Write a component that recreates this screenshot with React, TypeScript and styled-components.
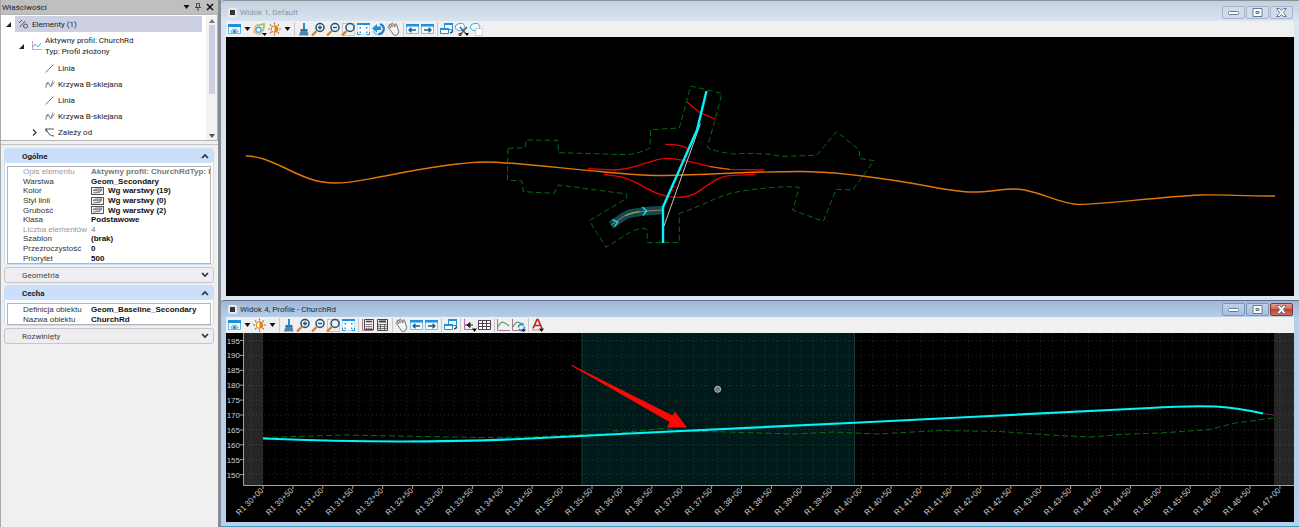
import React from "react";
import styled, { createGlobalStyle, css } from "styled-components";

const Global = createGlobalStyle`
  *, *::before, *::after { box-sizing: border-box; }
  body { margin: 0; background: #8e9399; }
  button { font: inherit; color: inherit; padding: 0; margin: 0; border: 0; background: none; cursor: pointer; }
  svg { display: block; }
  ul { list-style: none; margin: 0; padding: 0; }
  h1, h2 { margin: 0; font-weight: inherit; font-size: inherit; }
`;

const ui = `Roboto, "Open Sans", sans-serif`;
const grid = `"Liberation Sans", Arial, sans-serif`;

const Shell = styled.div`
  display: flex;
  min-height: 100vh;
  background: #878d93;
`;

/* ---------- properties panel ---------- */

const Panel = styled.aside`
  flex: 0 0 218px;
  display: flex;
  flex-direction: column;
  background: #f0f0f0;
  border-left: 1px solid #a8a8a8;
  font-family: ${ui};
  color: #222;
`;

const PanelBar = styled.header`
  display: flex;
  align-items: center;
  height: 14px;
  padding: 0 2px 0 1px;
  background: #bfbfbf;
  font-size: 8px;
  h1 { flex: 1; }
`;

const BarButton = styled.button`
  width: 12px;
  height: 12px;
  display: grid;
  place-items: center;
`;

const TreeBox = styled.div`
  display: flex;
  height: 127px;
  padding-top: 1px;
  background: #fff;
  border: 1px solid #b4b4b4;
  border-width: 1px 1px 1px 0;
`;

const Tree = styled.ul`
  flex: 1;
  font-size: 8px;
  line-height: 11px;
`;

const TreeRow = styled.li<{ $depth: number; $tall?: boolean; $selected?: boolean }>`
  display: flex;
  align-items: center;
  height: ${(p) => (p.$tall ? 28 : 16)}px;
  margin-right: 4px;
  padding-left: ${(p) => p.$depth * 13}px;
  white-space: pre-line;
  ${(p) =>
    p.$selected &&
    css`
      background: linear-gradient(to right, #fff 14px, #cdcfe2 14px);
    `}
`;

const Toggle = styled.span`
  flex: 0 0 14px;
  height: 14px;
  display: grid;
  place-items: center;
`;

const TreeIcon = styled.span`
  flex: 0 0 17px;
  display: grid;
  justify-content: center;
`;

const Scroll = styled.div`
  flex: 0 0 11px;
  display: flex;
  flex-direction: column;
  align-items: center;
  justify-content: space-between;
  background: #f2f2f2;
`;

const ScrollButton = styled.button`
  width: 9px;
  height: 9px;
  display: grid;
  place-items: center;
`;

const Thumb = styled.div`
  width: 6px;
  height: 69px;
  margin-bottom: auto;
  background: #cdcfe2;
`;

const Sections = styled.div`
  display: flex;
  flex-direction: column;
  flex: 1;
  gap: 2px;
  margin-top: 3px;
  padding: 3px 4px 0 3px;
  border-top: 1px solid #c4c4c4;
`;

const Section = styled.section<{ $open: boolean }>`
  border: 1px solid ${(p) => (p.$open ? "#c9dff9" : "#c6c6ca")};
  border-radius: 3px;
  background: ${(p) => (p.$open ? "#fbfcfe" : "#eeeef2")};
`;

const SectionHead = styled.button<{ $open: boolean }>`
  display: flex;
  align-items: center;
  justify-content: space-between;
  width: 100%;
  height: 14px;
  padding: 0 4px 0 17px;
  border-radius: 2px;
  text-align: left;
  font-family: ${ui};
  font-size: 8px;
  font-weight: ${(p) => (p.$open ? 700 : 400)};
  color: ${(p) => (p.$open ? "#222" : "#444")};
  background: ${(p) => (p.$open ? "#cbdffa" : "transparent")};
`;

const PropFrame = styled.div`
  margin: 3px 2px 0;
  border: 1px solid #b5b5b5;
  background: #fff;
  overflow: hidden;
`;

const PropTable = styled.table<{ $height: number }>`
  width: 100%;
  height: ${(p) => p.$height}px;
  table-layout: fixed;
  border-collapse: collapse;
  font-family: ${grid};
  font-size: 8px;
  line-height: 9px;
  th, td { padding: 0; text-align: left; white-space: nowrap; overflow: hidden; }
  th { width: 83px; padding-left: 15px; font-weight: 400; color: #333; }
  td { font-weight: 700; color: #111; }
`;

const PropRow = styled.tr<{ $muted?: boolean; $plain?: boolean }>`
  && th { color: ${(p) => (p.$muted ? "#999" : "#333")}; }
  && td {
    color: ${(p) => (p.$muted ? "#777" : "#111")};
    font-weight: ${(p) => (p.$plain ? 400 : 700)};
  }
`;

const Swatched = styled.span`
  display: flex;
  align-items: center;
  gap: 4px;
`;

/* ---------- view windows ---------- */

const Workspace = styled.main`
  flex: 1;
  min-width: 0;
  margin-left: 3px;
  display: flex;
  flex-direction: column;
  background: #b8cdea;
`;

const ViewWindow = styled.section<{ $active?: boolean }>`
  padding: 0 5px 4px;
  border-top: 1px solid ${(p) => (p.$active ? "#5f7183" : "#8b9299")};
  border-radius: 4px 0 0 0;
  background: ${(p) =>
    p.$active
      ? "linear-gradient(#9fb8d5, #b7cee8 17px, #b9cfee)"
      : "linear-gradient(#c3d0de, #d9e5f1 21px, #dbe6f4)"};
  border-bottom: ${(p) => (p.$active ? "1px solid #3f9db5" : "0")};
`;

const TitleBar = styled.header<{ $active?: boolean }>`
  display: flex;
  align-items: center;
  height: ${(p) => (p.$active ? 16 : 20)}px;
  padding: ${(p) => (p.$active ? 0 : 3)}px 1px 0 2px;
  gap: 3px;
  font-family: ${ui};
  font-size: 8px;
  color: ${(p) => (p.$active ? "#1f2a36" : "#8d959d")};
  h2 { flex: 1; white-space: nowrap; }
`;

const Badge = styled.span`
  width: 9px;
  height: 9px;
  display: grid;
  place-items: center;
  border-radius: 2px;
  background: #e8ecf0;
  &::before { content: ""; width: 5px; height: 5px; background: #333; }
`;

const Caption = styled.div`
  display: flex;
  gap: 1px;
`;

const CaptionButton = styled.button<{ $active?: boolean; $danger?: boolean }>`
  width: 23px;
  height: 13px;
  display: grid;
  place-items: center;
  border-radius: 2px;
  border: 1px solid ${(p) => (p.$danger ? "#7d3a3a" : p.$active ? "#7f98b8" : "#a5b4cb")};
  background: ${(p) =>
    p.$danger
      ? "linear-gradient(#e0a095, #d0604c 50%, #c04028 50%, #d0705c)"
      : p.$active
        ? "linear-gradient(#bed2ea, #a6bfdd)"
        : "#cfdcea"};
`;

const Toolbar = styled.div`
  display: flex;
  align-items: center;
  height: 16px;
  padding-left: 1px;
  background: #f0f0f0;
  overflow: hidden;
`;

const Tool = styled.button`
  flex: 0 0 15px;
  height: 15px;
  display: grid;
  place-items: center;
`;

const Drop = styled.button`
  flex: 0 0 10px;
  height: 15px;
  display: grid;
  place-items: center;
`;

const Rule = styled.span`
  flex: 0 0 1px;
  height: 14px;
  margin: 0 1px 0 2px;
  background: #c8c8c8;
`;

const Canvas = styled.svg`
  width: 100%;
  height: auto;
  background: #000;
`;

/* ---------- icons ---------- */

const blue = "#1e90dc";
const navy = "#23506e";

const Caret = () => (
  <svg width="7" height="4" viewBox="0 0 7 4"><path d="M0.5 0h6L3.5 4z" fill="#111" /></svg>
);

const Magnifier = () => (
  <>
    <path d="M1 13.5 5.5 9" stroke="#dd7d20" strokeWidth="2.2" />
    <circle cx="9" cy="5.5" r="4" fill="#e8f4f8" stroke={navy} strokeWidth="1.5" />
  </>
);

const art: Record<string, React.ReactNode> = {
  view: (
    <>
      <path d="M1.5 2.5h12v9h-12z" fill="#f4faff" stroke="#6ab6ea" />
      <path d="M1 2h13v3H1z" fill={blue} />
      <path d="M3.500 9.500q4-5 8 0q-4 4-8 0z" fill="#bfe2f8" stroke="#62b4e8" />
      <circle cx="7.500" cy="9.500" r="1.600" fill={blue} />
    </>
  ),
  levels: (
    <>
      <path d="M2 10 3 5q1-3 4-2l5-1q1 1 0 4l-2 5q-2 2-5 1z" fill="none" stroke="#e8b070" strokeWidth="1.200" />
      <path d="M5 3.500 12 2l-1 7" fill="none" stroke="#8ccf6a" strokeWidth="1.400" />
      <circle cx="6.500" cy="7.800" r="2.600" fill="#fff" stroke="#42a5dd" strokeWidth="1.400" />
      <path d="M10 11h5l-2.500 3z" fill="#111" />
    </>
  ),
  sun: (
    <>
      <path d="M7.500 .500v2M7.500 11.500v2M1 7h2M12 7h2M3 2.500l1.300 1.300M10.700 10.200 12 11.500M12 2.500l-1.300 1.300M4.300 10.200 3 11.500" stroke="#a5744a" strokeWidth="1.200" />
      <circle cx="7.500" cy="7" r="3.200" fill="#fff" stroke="#e98a1c" strokeWidth="1.200" />
      <path d="M7.500 3.800a3.200 3.200 0 0 1 0 6.400z" fill="#e67e12" />
    </>
  ),
  brush: (
    <>
      <path d="M7 1h2v6H7z" fill={blue} />
      <path d="M4.500 7h7v2h-7z" fill="#3f6f92" />
      <path d="M4.500 9h7l1 4.500H3z" fill="#4e86b0" />
    </>
  ),
  zoomIn: (<><Magnifier /><path d="M7 5.500h4M9 3.500v4" stroke={navy} strokeWidth="1.300" /></>),
  zoomOut: (<><Magnifier /><path d="M7 5.500h4" stroke={navy} strokeWidth="1.300" /></>),
  zoomArea: (<><path d="M1.500 1.500h12v12h-12z" fill="none" stroke="#999" strokeDasharray="1 1" /><Magnifier /></>),
  fit: (
    <>
      <path d="M1.500 1.500h12v11h-12z" fill="#fff" stroke="#8ccdf2" strokeDasharray="1 1" />
      <path d="M1 1h13v2H1z" fill={blue} />
      <path d="M3.500 5h1.500v1.500H3.500zM10 5h1.500v1.500H10zM3.500 9.500h1.500V11H3.500zM10 9.500h1.500V11H10z" fill={blue} />
      <path d="M1.500 10v2.500h3M13.500 10v2.500h-3" fill="none" stroke={blue} />
    </>
  ),
  rotate: (
    <>
      <path d="M9 2q5 2 3.500 6.500Q11 12.500 7 12" fill="none" stroke="#2f7fc0" strokeWidth="2.200" />
      <path d="M6 12.500Q3 11.500 2.500 9" fill="none" stroke="#7cc4ee" strokeWidth="1.500" />
      <path d="M1 6.500 6 2v2.500h4V8H6v2.500z" fill={blue} />
    </>
  ),
  hand: (
    <path
      d="M5 9 2 5.500q0-1.200 1.200-.8L5 6 3 2.800q.4-1.300 1.500-.4L6.500 5 5.500 1.500q.8-1 1.600 0L9 5 9 2q1-.8 1.500.3L12 7q1.500 3 0 5L10 13.500q-2 0-3-1.500z"
      fill="#f4f4f4" stroke="#666" strokeWidth="0.900"
    />
  ),
  prev: (<><path d="M1.500 2.500h12v9h-12z" fill="#f6fbff" stroke="#7dbce8" /><path d="M1 2h13v2.500H1z" fill={blue} /><path d="M4 8h7M6.500 5.700 4 8l2.500 2.300" fill="none" stroke="#1d5d8c" strokeWidth="1.300" /></>),
  next: (<><path d="M1.500 2.500h12v9h-12z" fill="#f6fbff" stroke="#7dbce8" /><path d="M1 2h13v2.500H1z" fill={blue} /><path d="M4 8h7M8.500 5.700 11 8l-2.500 2.300" fill="none" stroke="#1d5d8c" strokeWidth="1.300" /></>),
  copy: (
    <>
      <path d="M5.500 1.500h8v6h-8z" fill="#fff" stroke={blue} /><path d="M5 1h9v2H5z" fill={blue} />
      <path d="M1.500 6.500h8v5h-8z" fill="#fff" stroke={blue} /><path d="M1 6h9v2H1z" fill={blue} />
      <path d="M11 11q2.500 0 2.500-3" fill="none" stroke="#333" strokeWidth="1.200" />
    </>
  ),
  clip: (
    <>
      <path d="M1 6q0-4 4-4.500h4l2 3-2 4H4z" fill="#eef8ff" stroke="#55a9de" />
      <path d="m6 5 7 8M13 5l-7 8" stroke="#555" strokeWidth="1.200" />
      <circle cx="6" cy="12.500" r="1.200" fill="none" stroke="#333" /><path d="M11 11h4l-2 3z" fill="#111" />
    </>
  ),
  mask: (
    <>
      <path d="M1 6q0-4 4-4.500h4l2 3-2 4H4z" fill="#eef8ff" stroke="#55a9de" />
      <path d="M6.500 6.500h7v7h-7z" fill="#fff" stroke="#aaa" strokeDasharray="1 1" />
    </>
  ),
  calc: (
    <>
      <path d="M2.500 1v11.500h11" fill="none" stroke="#a78" /><path d="M4.500 1.500h9v10h-9z" fill="#eee" stroke="#444" />
      <path d="M6 3.500h6" stroke="#444" strokeWidth="1.500" /><path d="M6 6.500h6M6 8.500h6M6 10.300h6" stroke="#555" strokeDasharray="1.500 0.700" />
    </>
  ),
  sheet: (
    <>
      <path d="M2.500 1.500h10v11h-10z" fill="#eee" stroke="#444" /><path d="M4 3.500h7" stroke="#444" strokeWidth="2" />
      <path d="M2 6.500h11M2 8.500h11M2 10.500h11M5.500 6v6M9.500 6v6" stroke="#555" strokeWidth="0.800" />
    </>
  ),
  origin: (<><path d="M2.500 1v10.500H14" fill="none" stroke="#b06fb0" /><path d="M3 7h8M8 4.500 5 7l3 2.500z" fill="#222" stroke="#222" /><path d="M10 10.500h5L12.500 14z" fill="#111" /></>),
  table: (<path d="M1.500 2.500h12v9h-12zM1.500 5.500h12M1.500 8.500h12M5.500 2.500v9M9.500 2.500v9" fill="#fff" stroke="#54404e" />),
  profile: (<><path d="M1.500 1v11.500H14" fill="none" stroke="#a07a9a" /><path d="M2 9q3-6 6-4.500T13 8" fill="none" stroke="#54a05c" strokeWidth="1.200" /></>),
  profileView: (<><path d="M1.500 1v11.500H14" fill="none" stroke="#a07a9a" /><path d="M2 9q3-6 6-4.500T13 6" fill="none" stroke="#54a05c" strokeWidth="1.200" /><path d="M7.500 9.500a2.800 2.800 0 0 1 5-2M13 8.500a2.800 2.800 0 0 1-5 2.500" fill="none" stroke="#3499d6" strokeWidth="1.700" /><path d="M10 11.500h5L12.500 14z" fill="#111" /></>),
  annotate: (<><path d="M3 10.500 7 1.500h1l4 9M4.500 7.500h6" fill="none" stroke="#c5222a" strokeWidth="1.700" /><path d="M2 12h11" stroke="#c88" /><path d="M9 10.500h5L11.500 14z" fill="#111" /></>),
};

const Glyph = ({ name }: { name: string }) => (
  <svg width="15" height="14" viewBox="0 0 15 14" aria-hidden="true">{art[name]}</svg>
);

const Tools = ({ items }: { items: string[] }) => (
  <Toolbar role="toolbar">
    {items.map((name, i) =>
      name === "|" ? <Rule key={i} /> :
      name === "v" ? <Drop key={i} aria-label="menu"><Caret /></Drop> :
      <Tool key={i} aria-label={name}><Glyph name={name} /></Tool>
    )}
  </Toolbar>
);

const planTools = ["view", "v", "levels", "sun", "v", "|", "brush", "zoomIn", "zoomOut", "zoomArea", "fit", "rotate", "hand", "|", "prev", "next", "|", "copy", "clip", "mask"];
const profileTools = ["view", "v", "sun", "v", "|", "brush", "zoomIn", "zoomOut", "zoomArea", "fit", "|", "calc", "sheet", "|", "hand", "prev", "next", "|", "copy", "|", "origin", "table", "|", "profile", "profileView", "|", "annotate"];

/* ---------- window chrome ---------- */

const WindowTitle = ({ title, active }: { title: string; active?: boolean }) => {
  const ink = { fill: "#fff", stroke: "#68788e", strokeWidth: 1 };
  return (
    <TitleBar $active={active}>
      <Badge />
      <h2>{title}</h2>
      <Caption>
        <CaptionButton $active={active} aria-label="minimize">
          <svg width="11" height="9" viewBox="0 0 11 9"><rect x="0.500" y="3.500" width="10" height="3" rx="1" {...ink} /></svg>
        </CaptionButton>
        <CaptionButton $active={active} aria-label="maximize">
          <svg width="11" height="9" viewBox="0 0 11 9"><path d="M1 .5h9v8H1zM4 3.500v2h3v-2z" fillRule="evenodd" {...ink} /></svg>
        </CaptionButton>
        <CaptionButton $active={active} $danger={active} aria-label="close">
          <svg width="11" height="9" viewBox="0 0 11 9"><path d="M.7.500h3l1.800 2 1.800-2h3L7.300 4.500l3 4h-3l-1.800-2-1.800 2h-3l3-4z" {...ink} /></svg>
        </CaptionButton>
      </Caption>
    </TitleBar>
  );
};

/* ---------- plan drawing ---------- */

const PlanDrawing = () => (
  <Canvas viewBox="226 37 1068 259" role="img" aria-label="Default">
    <g fill="none">
      <g transform="translate(480 70) scale(0.33333)">
        <path
          d="M84 235 135 233 138 210 233 211 236 248 440 254Q480 250 510 234L512 179 598 174 632 48 726 70 705 150 682 232Q700 244 760 252L800 250 860 252 905 259 1010 256 1070 185 1138 240 1138 265 1182 272 1118 360 1068 358 1030 454 938 420 958 352 920 350Q830 354 755 369C700 385 660 410 598 430L598 518 503 518 500 478Q482 470 450 487L378 532 328 452 440 385 440 372 235 345 222 370 130 365 126 333 82 330Z"
          stroke="#066c10" strokeWidth="3" strokeDasharray="17 9"
        />
        <path d="M549 420C500 423 470 425 445 432 425 440 412 455 393 465" stroke="#0d4d50" strokeWidth="25" />
        <path d="M549 420C500 423 470 425 445 432 425 440 412 455 393 465" stroke="#c46464" strokeWidth="3" />
        <path d="M478 425Q455 428 437 437" stroke="#b8b030" strokeWidth="3" />
        <path d="M487 411 500 423 489 436M397 449 413 456 404 470" stroke="#20e0e8" strokeWidth="4" />
        <g stroke="#ea0000" strokeWidth="4">
          <path d="M621 96 660 128 706 147" />
          <path d="M556 223Q600 222 622 235" />
          <path d="M324 296 400 300C470 300 510 266 560 265 620 265 660 290 750 298L854 300" />
          <path d="M372 313 420 320C480 332 520 382 590 382 670 385 680 318 760 316L826 313" />
          <path d="M578 350h7M574 361h7" />
        </g>
      </g>
      <path
        d="M246 156C258 156 268 160 285 168 305 178 318 183 335 183 352 183 362 180 385 176 420 169 460 162 486 162 510 162 560 168 600 171.500 630 174.500 640 175.500 660 175.500 700 175.500 740 171.500 800 171.500 835 171.500 880 178 910 183 940 188 955 192 972 192 990 192 1000 189 1016 189 1035 189 1060 204.500 1080 204.500 1100 204.500 1160 197 1200 195 1225 194.500 1240 196 1275 196"
        stroke="#e07808" strokeWidth="1.400"
      />
      <path d="M709 166.500 730 169.500" stroke="#e07808" strokeWidth="1.200" />
      <path d="M700.500 123.500 664 226" stroke="#c8c8c8" />
      <path d="M706.500 91 697 130 663 207V243" stroke="#00f4f8" strokeWidth="2.400" />
    </g>
  </Canvas>
);

/* ---------- profile drawing ---------- */

const stationStep = 29.91;
const stations = Array.from({ length: 35 }, (_, i) => ({
  x: 263 + i * stationStep,
  label: `R1 ${30 + Math.floor(i / 2)}+${i % 2 ? "50" : "00"}`,
}));
const levels = Array.from({ length: 10 }, (_, i) => ({ y: 340.500 + i * 14.900, value: 195 - i * 5 }));
const minor = Array.from({ length: 87 }, (_, i) => 251 + i * 11.964);

const ProfileDrawing = () => (
  <Canvas viewBox="226 333 1068 189" role="img" aria-label="Profile">
    <rect x="244" y="333" width="19" height="152" fill="#262626" />
    <rect x="1274" y="333" width="20" height="152" fill="#262626" />
    <rect x="582" y="333" width="273" height="152" fill="#001a1a" />
    <path d="M582 333V485M854.500 333V485" stroke="#1c3c3c" />
    <g stroke="#fff" strokeOpacity="0.150">
      {minor.map((x) => <path key={x} d={`M${x} 333V485`} strokeDasharray="1 3" />)}
      {levels.map((l) => <path key={l.y} d={`M244 ${l.y}H1294`} strokeDasharray="1 3" />)}
    </g>
    <g fontFamily={grid} fontSize="8" fill="#d0d0d0" textAnchor="end">
      {levels.map((l) => <text key={l.value} x="240" y={l.y + 3}>{l.value}</text>)}
    </g>
    <g stroke="#a0a0a0" fill="none">
      <path d="M243.500 333V485.500H1294" />
      {levels.map((l) => <path key={l.y} d={`M240 ${l.y}H243`} />)}
      {stations.map((s) => <path key={s.x} d={`M${s.x} 486V489`} />)}
    </g>
    <g fontFamily={grid} fontSize="8" fill="#d0d0d0" textAnchor="end">
      {stations.map((s) => (
        <text key={s.label} transform={`translate(${s.x + 1} 491) rotate(-45)`}>{s.label}</text>
      ))}
    </g>
    <path
      d="M263 437.500 345 435 480 437.500 530 437 560 435.500 610 433.500 615 430.500 624 432.500 663 428.500 687 431 727 432 793 434 833 432 877 434 940 430.500 1000 431.500 1050 435 1090 437 1120 434.500 1160 433 1210 429.500 1235 423 1274 418"
      fill="none" stroke="#0a6a14" strokeDasharray="6 3"
    />
    <path d="M1263 413.500 1274 415" stroke="#702060" />
    <path
      d="M263 438.500C300 440 350 441.500 400 441.500 450 441.500 490 440.500 530 438.500L660 432 860 422.500 1000 415.500 1150 408C1180 406 1200 406 1216 406.500 1230 407.500 1245 409.500 1263 413.500"
      fill="none" stroke="#00f4f8" strokeWidth="2.200"
    />
    <path d="M571 365.500 572 365 672.700 415.500 675 411.500 687 427.500 667 427.500 669.500 422z" fill="#fa0808" />
    <circle cx="717.700" cy="389.300" r="3" fill="#70787a" stroke="#b8c0c0" />
  </Canvas>
);

/* ---------- properties content ---------- */

const Chevron = ({ up }: { up?: boolean }) => (
  <svg width="8" height="6" viewBox="0 0 8 6">
    <path d={up ? "M1 5 4 2 7 5" : "M1 1 4 4 7 1"} fill="none" stroke="#333" strokeWidth="1.700" />
  </svg>
);

const Expanded = () => <svg width="5" height="5" viewBox="0 0 5 5"><path d="M5 0V5H0z" fill="#222" /></svg>;

const LineIcon = () => <svg width="9" height="9" viewBox="0 0 9 9"><path d="M.5 8.500 8.500.500" stroke="#777" /></svg>;

const CurveIcon = () => (
  <svg width="10" height="9" viewBox="0 0 10 9">
    <path d="M.500 8 3 2l2.500 5L8 .500M.500 4.500 3 2M5.500 7l4-5" fill="none" stroke="#888" />
  </svg>
);

const LayerIcon = () => (
  <svg width="13" height="8" viewBox="0 0 13 8">
    <rect x="0.500" y="0.500" width="12" height="7" fill="#f4f4f4" stroke="#555" />
    <path d="M2 3.500 5 2h6L8.500 4zM2 6l6.500-.5L11 3" fill="#ccc" stroke="#666" strokeWidth="0.800" />
  </svg>
);

type Prop = { name: string; value: string; muted?: boolean; plain?: boolean; layer?: boolean };

const general: Prop[] = [
  { name: "Opis elementu", value: "Aktywny profil: ChurchRdTyp: Pr", muted: true },
  { name: "Warstwa", value: "Geom_Secondary" },
  { name: "Kolor", value: "Wg warstwy (19)", layer: true },
  { name: "Styl linii", value: "Wg warstwy (0)", layer: true },
  { name: "Grubość", value: "Wg warstwy (2)", layer: true },
  { name: "Klasa", value: "Podstawowe" },
  { name: "Liczba elementów", value: "4", muted: true, plain: true },
  { name: "Szablon", value: "(brak)" },
  { name: "Przezroczystość", value: "0" },
  { name: "Priorytet", value: "500" },
];

const feature: Prop[] = [
  { name: "Definicja obiektu", value: "Geom_Baseline_Secondary" },
  { name: "Nazwa obiektu", value: "ChurchRd" },
];

const PropSection = ({ title, rows, height = 0 }: { title: string; rows?: Prop[]; height?: number }) => (
  <Section $open={!!rows}>
    <SectionHead $open={!!rows} aria-expanded={!!rows}>
      {title}
      <Chevron up={!!rows} />
    </SectionHead>
    {rows && (
      <PropFrame>
        <PropTable $height={height}>
          <tbody>
            {rows.map((r) => (
              <PropRow key={r.name} $muted={r.muted} $plain={r.plain}>
                <th scope="row">{r.name}</th>
                <td>{r.layer ? <Swatched><LayerIcon />{r.value}</Swatched> : r.value}</td>
              </PropRow>
            ))}
          </tbody>
        </PropTable>
      </PropFrame>
    )}
  </Section>
);

export default function App() {
  return (
    <>
      <Global />
      <Shell>
        <Panel>
          <PanelBar>
            <h1>Właściwości</h1>
            <BarButton aria-label="options"><Caret /></BarButton>
            <BarButton aria-label="pin">
              <svg width="6" height="8" viewBox="0 0 6 8"><path d="M1.500.500h3v4h-3zM0 4.500h6M3 5v3" fill="none" stroke="#444" /></svg>
            </BarButton>
            <BarButton aria-label="close">
              <svg width="8" height="8" viewBox="0 0 8 8"><path d="m1 1 6 6M7 1 1 7" stroke="#111" strokeWidth="1.500" /></svg>
            </BarButton>
          </PanelBar>
          <TreeBox>
            <Tree role="tree">
              <TreeRow $depth={0} $selected>
                <Toggle><Expanded /></Toggle>
                <TreeIcon>
                  <svg width="11" height="10" viewBox="0 0 11 10"><path d="M1 4 4 1M2 8l5-6" stroke="#555" /><circle cx="7.500" cy="7" r="2" fill="none" stroke="#555" /></svg>
                </TreeIcon>
                Elementy (1)
              </TreeRow>
              <TreeRow $depth={1} $tall>
                <Toggle><Expanded /></Toggle>
                <TreeIcon>
                  <svg width="11" height="10" viewBox="0 0 11 10"><path d="M1.500 0v8.500H11" fill="none" stroke="#d49ad4" /><path d="M2 6 4 3l3 3 3-4" fill="none" stroke="#58b8c0" /></svg>
                </TreeIcon>
                {"Aktywny profil: ChurchRd\nTyp: Profil złożony"}
              </TreeRow>
              {["Linia", "Krzywa B-sklejana", "Linia", "Krzywa B-sklejana"].map((name, i) => (
                <TreeRow key={i} $depth={2}>
                  <Toggle />
                  <TreeIcon>{i % 2 ? <CurveIcon /> : <LineIcon />}</TreeIcon>
                  {name}
                </TreeRow>
              ))}
              <TreeRow $depth={2}>
                <Toggle>
                  <svg width="5" height="7" viewBox="0 0 5 7"><path d="m1 .500 3 3-3 3" fill="none" stroke="#333" strokeWidth="1.200" /></svg>
                </Toggle>
                <TreeIcon>
                  <svg width="10" height="9" viewBox="0 0 10 9"><path d="M0 1h9M1 1l3 5q2 2 5 2M1 1v3" fill="none" stroke="#555" /></svg>
                </TreeIcon>
                Zależy od
              </TreeRow>
            </Tree>
            <Scroll>
              <ScrollButton aria-label="up"><svg width="6" height="4" viewBox="0 0 6 4"><path d="M0 4h6L3 0z" fill="#777" /></svg></ScrollButton>
              <Thumb />
              <ScrollButton aria-label="down"><svg width="6" height="4" viewBox="0 0 6 4"><path d="M0 0h6L3 4z" fill="#555" /></svg></ScrollButton>
            </Scroll>
          </TreeBox>
          <Sections>
            <PropSection title="Ogólne" rows={general} height={96} />
            <PropSection title="Geometria" />
            <PropSection title="Cecha" rows={feature} height={20} />
            <PropSection title="Rozwinięty" />
          </Sections>
        </Panel>
        <Workspace>
          <ViewWindow>
            <WindowTitle title="Widok 1, Default" />
            <Tools items={planTools} />
            <PlanDrawing />
          </ViewWindow>
          <ViewWindow $active>
            <WindowTitle title="Widok 4, Profile - ChurchRd" active />
            <Tools items={profileTools} />
            <ProfileDrawing />
          </ViewWindow>
        </Workspace>
      </Shell>
    </>
  );
}
